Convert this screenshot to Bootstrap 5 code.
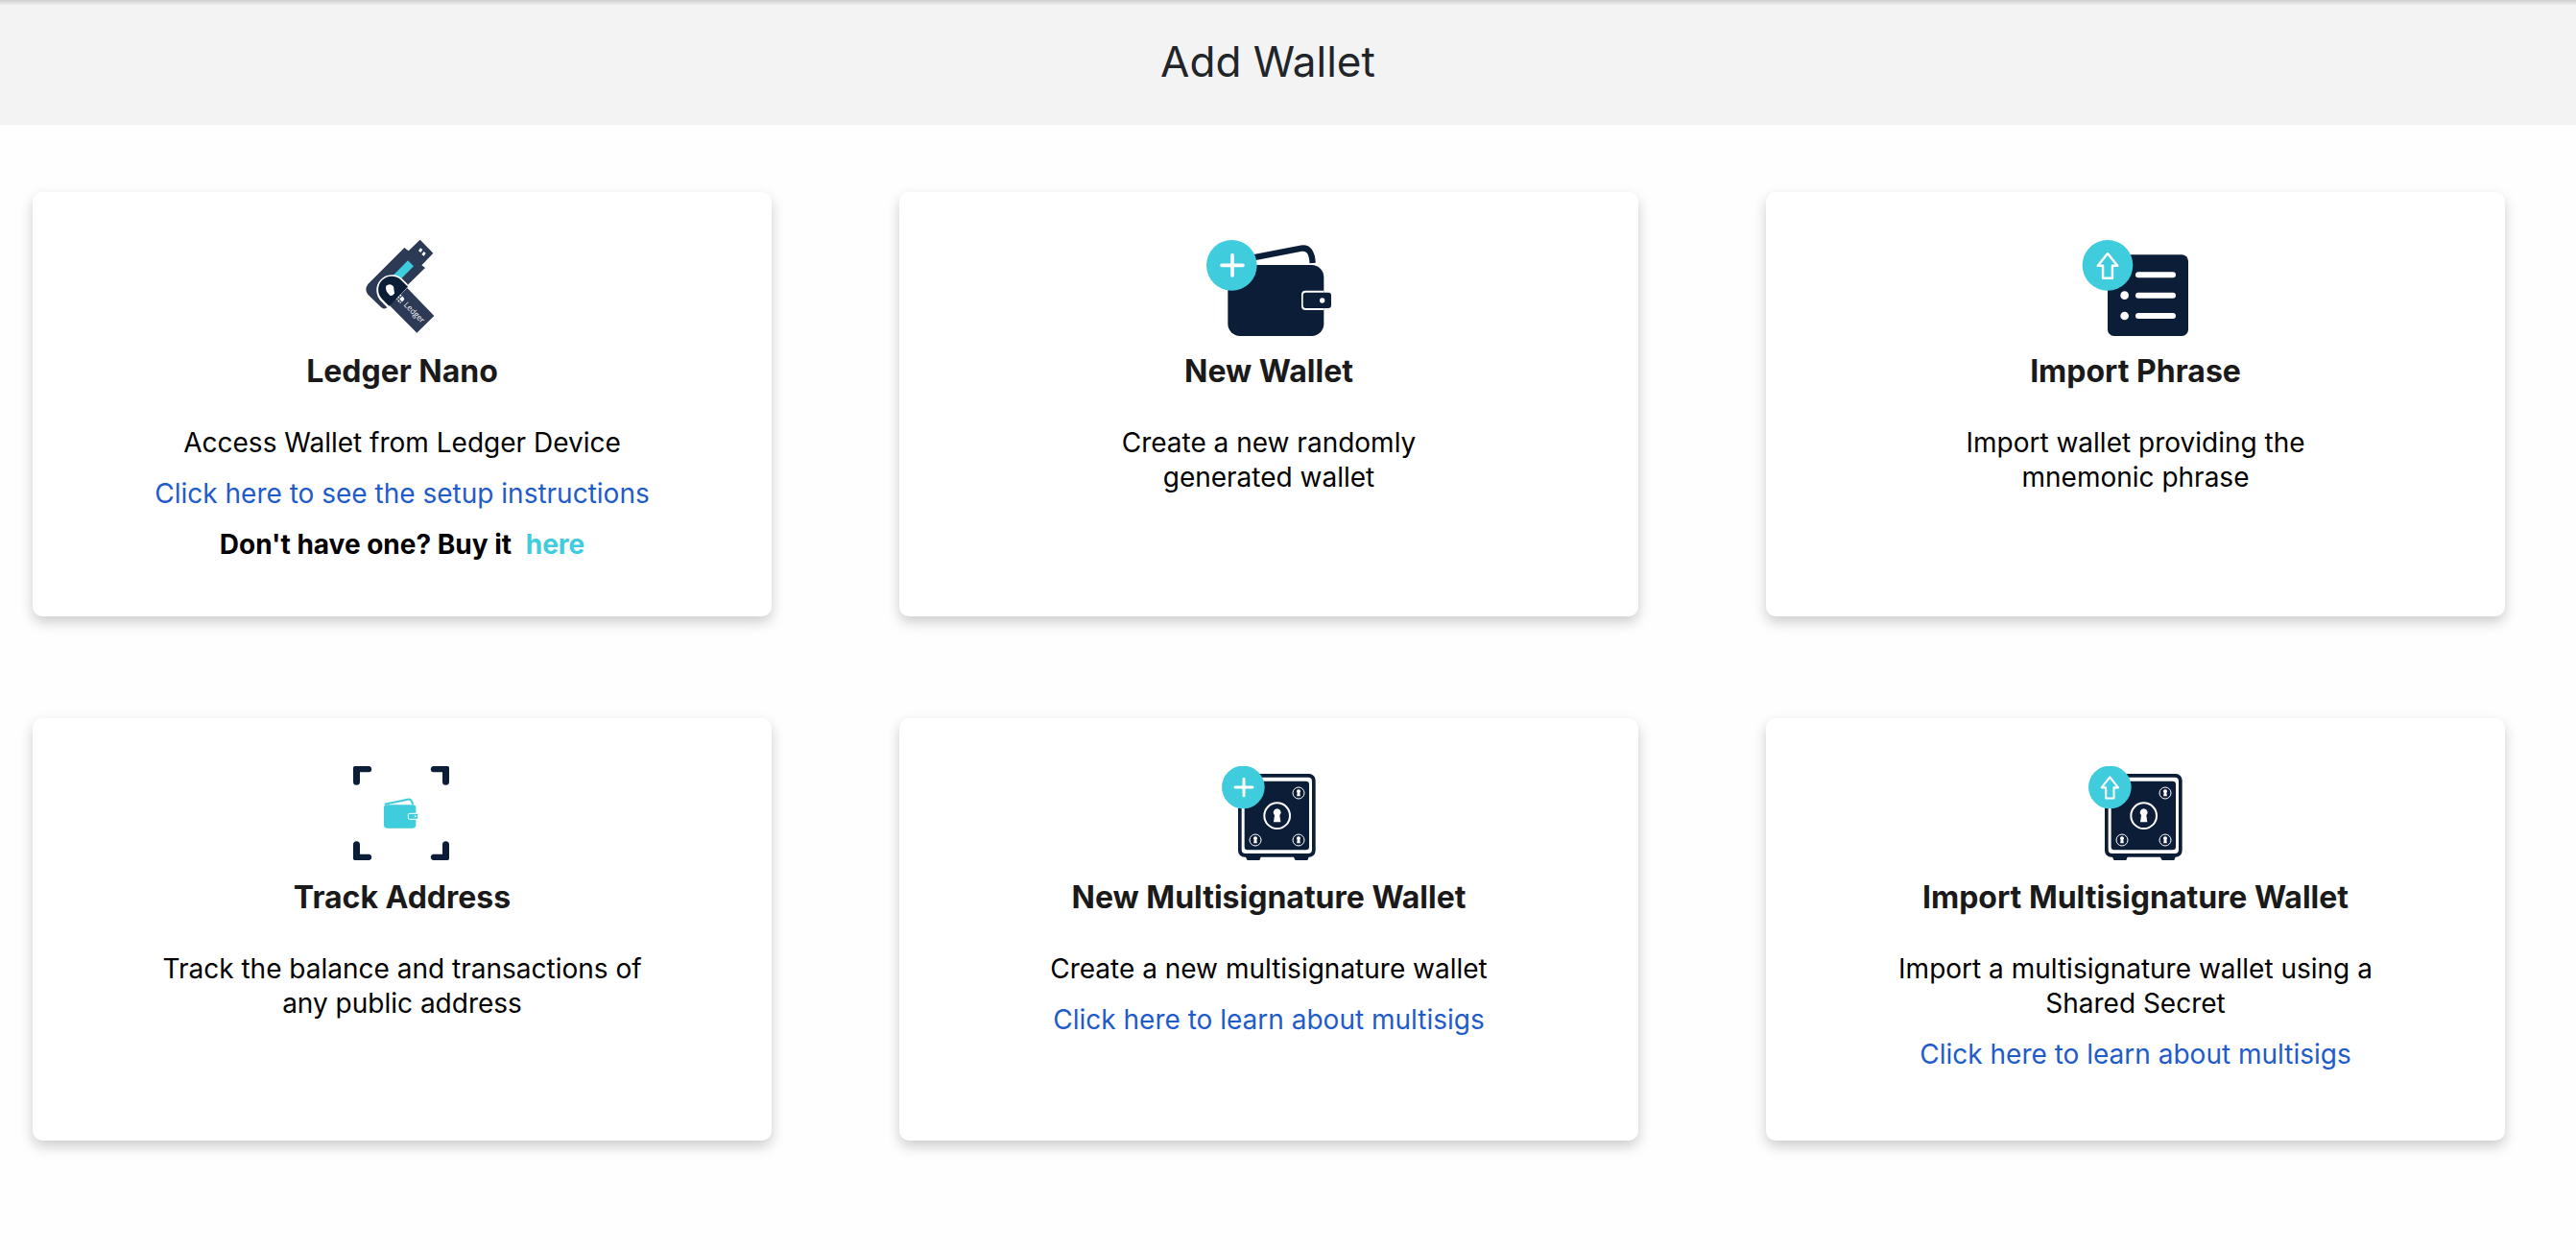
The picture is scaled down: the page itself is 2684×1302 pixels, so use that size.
<!DOCTYPE html>
<html lang="en">
<head>
<meta charset="utf-8">
<meta name="viewport" content="width=device-width, initial-scale=1">
<title>Add Wallet</title>
<link href="https://cdn.jsdelivr.net/npm/bootstrap@5.3.0/dist/css/bootstrap.min.css" rel="stylesheet">
<style>
  :root { --navy: #0c1d38; --slate: #2d3a55; --aqua: #3fccdc; }
  body { font-family: Inter, "Open Sans", sans-serif; font-size: 28px; line-height: 36px; color: #000; background: #fefefe; }
  .page-head { background: linear-gradient(#cfcfcf, #f3f3f3 6px); padding: 40px 42px 42px 0; }
  .page-head h1 { font-size: 44px; line-height: 48px; font-weight: 400; color: #212529; }
  .wallet-grid { padding: 70px 74px 70px 34px; row-gap: 106px; column-gap: 133px; grid-template-columns: repeat(auto-fit, minmax(600px, 1fr)); }
  .option { border: 0; border-radius: 10px; min-height: 440px; padding: 50px 24px 40px; background: #fff; box-shadow: 0 6px 14px rgba(0, 0, 0, .2); }
  .option svg { width: 140px; height: 100px; }
  .option h2 { font-size: 32px; line-height: 40px; font-weight: 700; color: #1a1a1a; margin: 17px 0 36px; }
  .option p { margin-bottom: 17px; }
  .option a { color: #1f5bc9; text-decoration: none; }
  .option .buy { font-weight: 700; }
  .option .buy a { color: var(--aqua); margin-left: 8px; }
</style>
<script src="https://cdn.jsdelivr.net/npm/bootstrap@5.3.0/dist/js/bootstrap.bundle.min.js" defer></script>
</head>
<body>
<svg width="0" height="0" class="position-absolute" aria-hidden="true">
  <defs>
    <g id="keyhole"><path fill="#fff" d="M0-22a12 12 0 0 1 8 21l3 21h-22l3-21a12 12 0 0 1 8-21z"/></g>
    <g id="plus"><path d="M0-32V32M-33 0H33" fill="none" stroke="#fff" stroke-width="11" stroke-linecap="round"/></g>
    <g id="arrow"><path d="M0-36L29 0H14V37H-14V0H-29Z" fill="none" stroke="#fff" stroke-width="7" stroke-linejoin="round"/></g>
    <g id="safe">
      <path fill="#0c1d38" d="M108 312h52l-6 15h-38zM258 312h52l-6 15h-38z"/>
      <rect x="87" y="57" width="242" height="260" rx="20" fill="#0c1d38"/>
      <rect x="98" y="68" width="220" height="238" rx="12" fill="#fff"/>
      <rect x="107" y="80" width="202" height="215" rx="10" fill="#0c1d38"/>
      <g fill="none" stroke="#fff"><circle cx="209" cy="188" r="40" stroke-width="6"/>
        <g stroke-width="3"><circle cx="276" cy="117" r="18"/><circle cx="141" cy="264" r="18"/><circle cx="276" cy="264" r="18"/></g></g>
      <use href="#keyhole" transform="translate(209 188)"/>
      <use href="#keyhole" transform="translate(276 117) scale(.5)"/>
      <use href="#keyhole" transform="translate(141 264) scale(.5)"/>
      <use href="#keyhole" transform="translate(276 264) scale(.5)"/>
      <circle cx="103" cy="99" r="67" fill="#3fccdc"/>
    </g>
  </defs>
</svg>

<header class="page-head text-center"><h1 class="m-0">Add Wallet</h1></header>

<main class="wallet-grid d-grid text-center">
  <section class="card option align-items-center">
    <svg viewBox="-33 45 420 300" aria-hidden="true">
      <path fill="#2d3a55" d="M233 44L274 86L238 124L249 132L190 190L130 256Q121 263 112 256L70 215Q58 200 70 183L184 69L197 79Z"/>
      <path fill="#fff" d="M234 70l7 5-6 9-7-5zM245 81l6 5-6 9-7-5z"/>
      <path fill="#3fccdc" d="M195 109L213 127L167 173L149 155Z"/>
      <path fill="#fff" d="M112 237A47 47 0 0 1 178 167L195 184L133 259Z"/>
      <path fill="#0c1d38" d="M115 230A42 42 0 0 1 174 170L195 191L136 251Z"/>
      <path fill="#2d3a55" d="M193 195L277 282L223 335L138 250Z"/>
      <path fill="#0c1d38" d="M178 182L190 194L140 250L126 238Z"/>
      <path fill="#fff" d="M127 188Q139 178 150 190L153 211Q148 221 139 218Q122 203 127 188Z"/>
      <g fill="#fff" transform="translate(172 229) rotate(45)"><path d="M-2-10h6q6 0 6 6v7H-2zM-10-10h5v5h-5zM-10-2h5v5h-5zM-10 6h5v4q-5 0-5-4zM-2 6h5v5h-5zM6 6h4q0 5-4 5z"/></g>
      <text transform="translate(181 249) rotate(45)" fill="#fff" font-family="Open Sans, sans-serif" font-size="25">Ledger</text>
    </svg>
    <h2>Ledger Nano</h2>
    <p>Access Wallet from Ledger Device</p>
    <p><a href="#setup">Click here to see the setup instructions</a></p>
    <p class="buy">Don't have one? Buy it <a href="#buy">here</a></p>
  </section>

  <section class="card option align-items-center">
    <svg viewBox="33 45 420 300" aria-hidden="true">
      <path d="M190 101L345 71Q377 66 380 117" fill="none" stroke="#0c1d38" stroke-width="19"/>
      <rect x="115" y="123" width="300" height="222" rx="38" fill="#0c1d38"/>
      <path fill="#fff" d="M415 203H358Q345 203 345 216V251Q345 264 358 264H415Z"/>
      <rect x="350" y="209" width="88" height="49" rx="9" fill="#0c1d38"/>
      <circle cx="410" cy="234" r="8" fill="#fff"/>
      <circle cx="127" cy="124" r="79" fill="#3fccdc"/>
      <use href="#plus" transform="translate(129 124)"/>
    </svg>
    <h2>New Wallet</h2>
    <p>Create a new randomly<br>generated wallet</p>
  </section>

  <section class="card option align-items-center">
    <svg viewBox="15 45 420 300" aria-hidden="true">
      <rect x="138" y="91" width="252" height="254" rx="20" fill="#0c1d38"/>
      <path d="M234 154H342M234 218H342M234 282H342" stroke="#fff" stroke-width="18" stroke-linecap="round"/>
      <circle cx="191" cy="218" r="13" fill="#fff"/><circle cx="191" cy="282" r="13" fill="#fff"/>
      <circle cx="138" cy="124" r="79" fill="#3fccdc"/>
      <use href="#arrow" transform="translate(138 125) scale(1.06)"/>
    </svg>
    <h2>Import Phrase</h2>
    <p>Import wallet providing the<br>mnemonic phrase</p>
  </section>

  <section class="card option align-items-center">
    <svg viewBox="-18 33 420 300" aria-hidden="true">
      <g fill="#0c1d38">
        <path id="corner" d="M44 33H90A10 10 0 0 1 90 52H60V82A10 10 0 0 1 39 82V38Q39 33 44 33Z"/>
        <use href="#corner" transform="translate(378 0) scale(-1 1)"/>
        <use href="#corner" transform="translate(0 360) scale(1 -1)"/>
        <use href="#corner" transform="translate(378 360) scale(-1 -1)"/>
      </g>
      <path d="M137 152L209 137Q222 134 225 153" fill="none" stroke="#3fccdc" stroke-width="6"/>
      <rect x="135" y="154" width="100" height="73" rx="10" fill="#3fccdc"/>
      <rect x="211" y="181" width="31" height="18" rx="4" fill="#3fccdc" stroke="#fff" stroke-width="3"/>
      <circle cx="233" cy="190" r="3" fill="#fff"/>
    </svg>
    <h2>Track Address</h2>
    <p>Track the balance and transactions of<br>any public address</p>
  </section>

  <section class="card option align-items-center">
    <svg viewBox="-27 33 420 300" aria-hidden="true">
      <use href="#safe"/><use href="#plus" transform="translate(105 99) scale(.82)"/>
    </svg>
    <h2>New Multisignature Wallet</h2>
    <p>Create a new multisignature wallet</p>
    <p><a href="#multisigs">Click here to learn about multisigs</a></p>
  </section>

  <section class="card option align-items-center">
    <svg viewBox="-27 33 420 300" aria-hidden="true">
      <use href="#safe"/><use href="#arrow" transform="translate(103 100) scale(.9)"/>
    </svg>
    <h2>Import Multisignature Wallet</h2>
    <p>Import a multisignature wallet using a<br>Shared Secret</p>
    <p><a href="#multisigs">Click here to learn about multisigs</a></p>
  </section>
</main>
</body>
</html>
